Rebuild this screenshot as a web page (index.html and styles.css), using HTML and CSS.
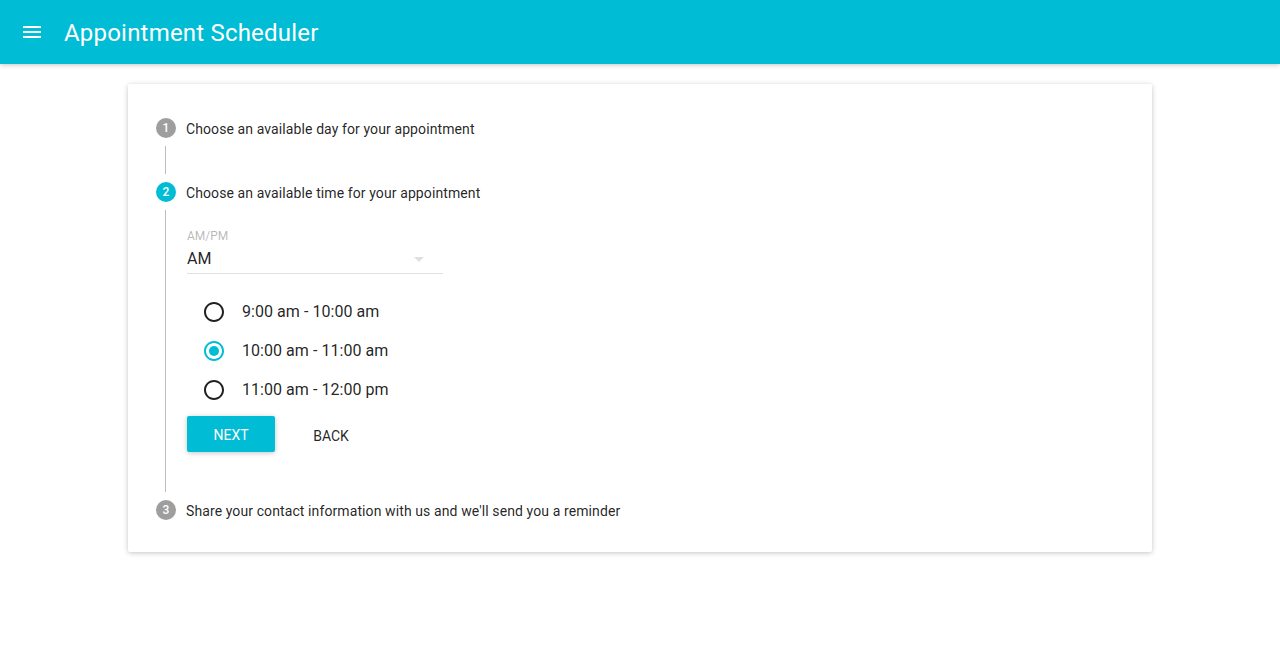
FILE: index.html
```html
<!DOCTYPE html>
<html>
<head>
<meta charset="utf-8">
<link rel="stylesheet" href="styles.css">
</head>
<body>
<header class="appbar">
  <button class="menu-btn" aria-label="menu">
    <svg viewBox="0 0 24 24" width="24" height="24"><path fill="#fff" d="M3 18h18v-2H3v2zm0-5h18v-2H3v2zm0-7v2h18V6H3z"/></svg>
  </button>
  <h1 class="title">Appointment Scheduler</h1>
</header>
<main class="main">
  <section class="card">
    <div class="step">
      <div class="step-head"><span class="step-num">1</span><span class="step-label">Choose an available day for your appointment</span></div>
      <div class="connector"></div>
    </div>
    <div class="step">
      <div class="step-head"><span class="step-num active">2</span><span class="step-label">Choose an available time for your appointment</span></div>
      <div class="step-content">
        <div class="select-field">
          <div class="select-label">AM/PM</div>
          <div class="select-value">AM
            <svg class="select-arrow" viewBox="0 0 24 24" width="24" height="24"><path fill="#e0e0e0" d="M7 10l5 5 5-5z"/></svg>
          </div>
          <div class="select-underline"></div>
        </div>
        <div class="radio-group">
          <label class="radio-row">
            <svg class="radio-icon" viewBox="0 0 24 24" width="24" height="24"><path fill="#212121" d="M12 2C6.48 2 2 6.48 2 12s4.48 10 10 10 10-4.48 10-10S17.52 2 12 2zm0 18c-4.42 0-8-3.58-8-8s3.58-8 8-8 8 3.58 8 8-3.58 8-8 8z"/></svg>
            <span class="radio-text">9:00 am - 10:00 am</span>
          </label>
          <label class="radio-row">
            <svg class="radio-icon" viewBox="0 0 24 24" width="24" height="24"><path fill="#00bcd4" d="M12 2C6.48 2 2 6.48 2 12s4.48 10 10 10 10-4.48 10-10S17.52 2 12 2zm0 18c-4.42 0-8-3.58-8-8s3.58-8 8-8 8 3.58 8 8-3.58 8-8 8z"/><circle cx="12" cy="12" r="5" fill="#00bcd4"/></svg>
            <span class="radio-text">10:00 am - 11:00 am</span>
          </label>
          <label class="radio-row">
            <svg class="radio-icon" viewBox="0 0 24 24" width="24" height="24"><path fill="#212121" d="M12 2C6.48 2 2 6.48 2 12s4.48 10 10 10 10-4.48 10-10S17.52 2 12 2zm0 18c-4.42 0-8-3.58-8-8s3.58-8 8-8 8 3.58 8 8-3.58 8-8 8z"/></svg>
            <span class="radio-text">11:00 am - 12:00 pm</span>
          </label>
        </div>
        <div class="actions">
          <button class="btn btn-raised">Next</button>
          <button class="btn btn-flat">Back</button>
        </div>
      </div>
    </div>
    <div class="step">
      <div class="step-head"><span class="step-num">3</span><span class="step-label">Share your contact information with us and we'll send you a reminder</span></div>
    </div>
  </section>
</main>
</body>
</html>
```
FILE: styles.css
```css
* { box-sizing: border-box; }
html, body { margin: 0; padding: 0; background: #fff; }
body { font-family: Roboto, "Noto Sans", sans-serif; color: rgba(0,0,0,0.87); }

.appbar {
  height: 64px;
  background: #00bcd4;
  display: flex;
  align-items: center;
  padding-left: 20px;
  box-shadow: 0 1px 6px rgba(0,0,0,0.12), 0 1px 4px rgba(0,0,0,0.12);
  position: relative;
  z-index: 1;
}
.menu-btn {
  width: 24px; height: 24px; padding: 0; border: 0; background: none;
  display: flex; margin-right: 20px;
}
.title {
  margin: 0;
  font-size: 24px;
  font-weight: 400;
  color: #fff;
  line-height: 32px;
  padding-top: 2px;
  letter-spacing: 0.2px;
}

.main { padding: 20px 0 40px; }
.card {
  width: 1024px;
  margin: 0 auto;
  background: #fff;
  border-radius: 2px;
  box-shadow: 0 1px 6px rgba(0,0,0,0.12), 0 1px 4px rgba(0,0,0,0.12);
  padding: 34px 0 32px 28px;
}

.step-head { display: flex; align-items: center; height: 20px; }
.step-num {
  width: 20px; height: 20px; border-radius: 50%;
  background: #9e9e9e; color: #fff;
  font-size: 12px; font-weight: 500; line-height: 20px; text-align: center;
  margin-right: 10px;
}
.step-num.active { background: #00bcd4; }
.step-label { font-size: 14px; color: rgba(0,0,0,0.87); padding-top: 2px; letter-spacing: 0.1px; }

.connector {
  margin: 8px 0 8px 9px;
  height: 28px;
  border-left: 1px solid #bdbdbd;
}
.step-content {
  margin: 8px 0 8px 9px;
  border-left: 1px solid #bdbdbd;
  padding-left: 21px;
  padding-bottom: 40px;
}

.select-field { width: 256px; height: 72px; padding-top: 19px; }
.select-label { font-size: 12px; line-height: 14px; color: rgba(0,0,0,0.3); }
.select-value {
  margin-top: 4px; font-size: 16px; line-height: 24px; height: 24px;
  display: flex; justify-content: space-between; align-items: center;
  color: rgba(0,0,0,0.87);
}
.select-arrow { margin-right: 12px; }
.select-underline { margin-top: 2px; height: 1px; background: #e0e0e0; }

.radio-group { margin-top: 10px; }
.radio-row { display: flex; align-items: center; height: 39px; }
.radio-icon { margin-left: 15px; margin-right: 16px; }
.radio-text { font-size: 16px; color: rgba(0,0,0,0.87); letter-spacing: 0.05px; }

.actions { display: flex; margin-top: 7px; }
.btn {
  height: 36px; min-width: 88px; border: 0; border-radius: 2px;
  font-family: Roboto, sans-serif; font-size: 14px; font-weight: 400;
  text-transform: uppercase; padding: 2px 16px 0; cursor: pointer;
}
.btn-raised {
  background: #00bcd4; color: #fff; margin-right: 12px;
  box-shadow: 0 1px 6px rgba(0,0,0,0.12), 0 1px 4px rgba(0,0,0,0.12);
}
.btn-flat { background: transparent; color: rgba(0,0,0,0.87); padding-top: 4px; }
```
